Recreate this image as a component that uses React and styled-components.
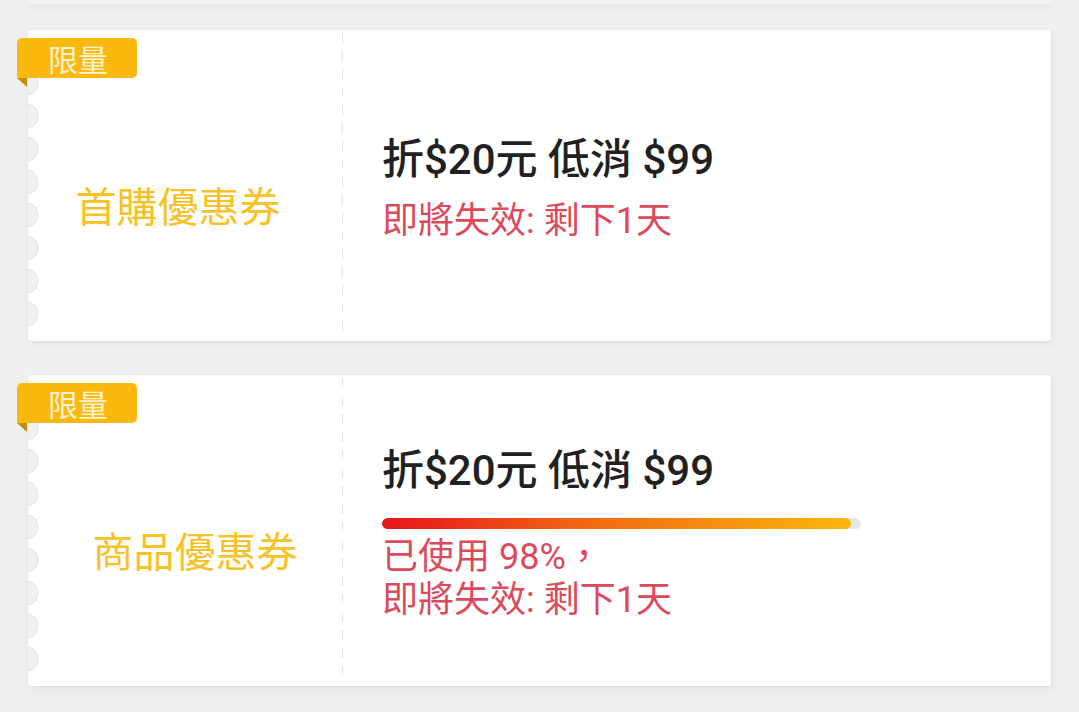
import React from "react";
import styled, { createGlobalStyle } from "styled-components";

const Global = createGlobalStyle`
  html, body { margin: 0; padding: 0; background: #efefef; }
  body { font-family: Roboto, "Noto Sans CJK TC", "Noto Sans", sans-serif; }
`;

const Page = styled.div`
  padding: 0 28px 30px 28px;
  display: flex;
  flex-direction: column;
`;

const PrevCardTail = styled.div`
  height: 4px;
  background: #f2f2f2;
  border-radius: 0 0 3px 3px;
  box-shadow: 2px 3px 6px rgba(0, 0, 0, 0.05);
  margin-bottom: 26px;
`;

const List = styled.div`
  display: flex;
  flex-direction: column;
  gap: 34px;
`;

const Card = styled.div`
  position: relative;
  height: 311px;
  background: #fff;
  border-radius: 3px;
  display: flex;
  box-shadow: 0 0 0 1px rgba(0, 0, 0, 0.025), 2px 3px 6px rgba(0, 0, 0, 0.05);

  &::before {
    content: "";
    position: absolute;
    left: 0;
    top: 0;
    bottom: 6px;
    width: 12px;
    background: radial-gradient(
        circle at -2px 20px,
        #f1f1f1 11.2px,
        #e3e3e3 11.8px,
        #e3e3e3 12.2px,
        transparent 12.8px
      )
      0 0 / 12px 33px repeat-y;
  }
`;

const Badge = styled.div`
  position: absolute;
  left: -11px;
  top: 8px;
  width: 120px;
  height: 40px;
  background: #fbb80f;
  border-radius: 5px 5px 5px 0;
  color: #fff4cf;
  font-size: 30px;
  line-height: 40px;
  text-align: center;
  padding-left: 2px;
  box-sizing: border-box;
  font-family: "Noto Sans CJK TC", sans-serif;
  z-index: 2;

  &::after {
    content: "";
    position: absolute;
    left: 0;
    top: 40px;
    border-style: solid;
    border-width: 0 10px 9px 0;
    border-color: transparent #c48e05 transparent transparent;
  }
`;

const LeftPane = styled.div`
  width: 314px;
  flex: none;
  display: flex;
  align-items: center;
  justify-content: center;
  box-sizing: border-box;
  padding-top: 36px;
  padding-left: ${(p) => p.$padLeft || 0}px;
  padding-right: ${(p) => p.$padRight || 0}px;
`;

const Label = styled.div`
  color: #f6c226;
  font-size: 41px;
  font-family: "Noto Sans CJK TC", sans-serif;
  white-space: nowrap;
`;

const Divider = styled.div`
  width: 1px;
  flex: none;
  margin: 3px 0 6px 0;
  background: repeating-linear-gradient(
    to bottom,
    #e3e3e3 0 10px,
    transparent 10px 18px
  );
`;

const RightPane = styled.div`
  flex: 1;
  display: flex;
  flex-direction: column;
  justify-content: center;
  padding-left: 39px;
  padding-top: 6px;
`;

const Title = styled.div`
  color: #212121;
  font-size: 42px;
  font-weight: 500;
  line-height: 52px;
  white-space: nowrap;
`;

const Note = styled.div`
  color: #dd4a5b;
  font-size: 36px;
  line-height: 43px;
  white-space: nowrap;
`;

const Track = styled.div`
  width: 479px;
  height: 11px;
  border-radius: 6px;
  background: #e7e7e7;
  margin: 21px 0 7px 0;
  overflow: hidden;
`;

const Fill = styled.div`
  height: 100%;
  border-radius: 6px;
  background: linear-gradient(to right, #e6141d, #f26a12 45%, #fbb80c);
`;

const TitleGap = styled.div`
  height: ${(p) => p.$h}px;
`;

function Coupon({ label, padLeft, padRight, children }) {
  return (
    <Card>
      <Badge>限量</Badge>
      <LeftPane $padLeft={padLeft} $padRight={padRight}>
        <Label>{label}</Label>
      </LeftPane>
      <Divider />
      <RightPane>{children}</RightPane>
    </Card>
  );
}

export default function App() {
  const used = 98;
  return (
    <>
      <Global />
      <Page>
        <PrevCardTail />
        <List>
          <Coupon label="首購優惠券" padRight={14}>
            <Title>折$20元 低消 $99</Title>
            <TitleGap $h={14} />
            <Note>即將失效: 剩下1天</Note>
          </Coupon>
          <Coupon label="商品優惠券" padLeft={20}>
            <Title>折$20元 低消 $99</Title>
            <Track>
              <Fill style={{ width: `${used}%` }} />
            </Track>
            <Note>已使用 {used}%，</Note>
            <Note>即將失效: 剩下1天</Note>
          </Coupon>
        </List>
      </Page>
    </>
  );
}
